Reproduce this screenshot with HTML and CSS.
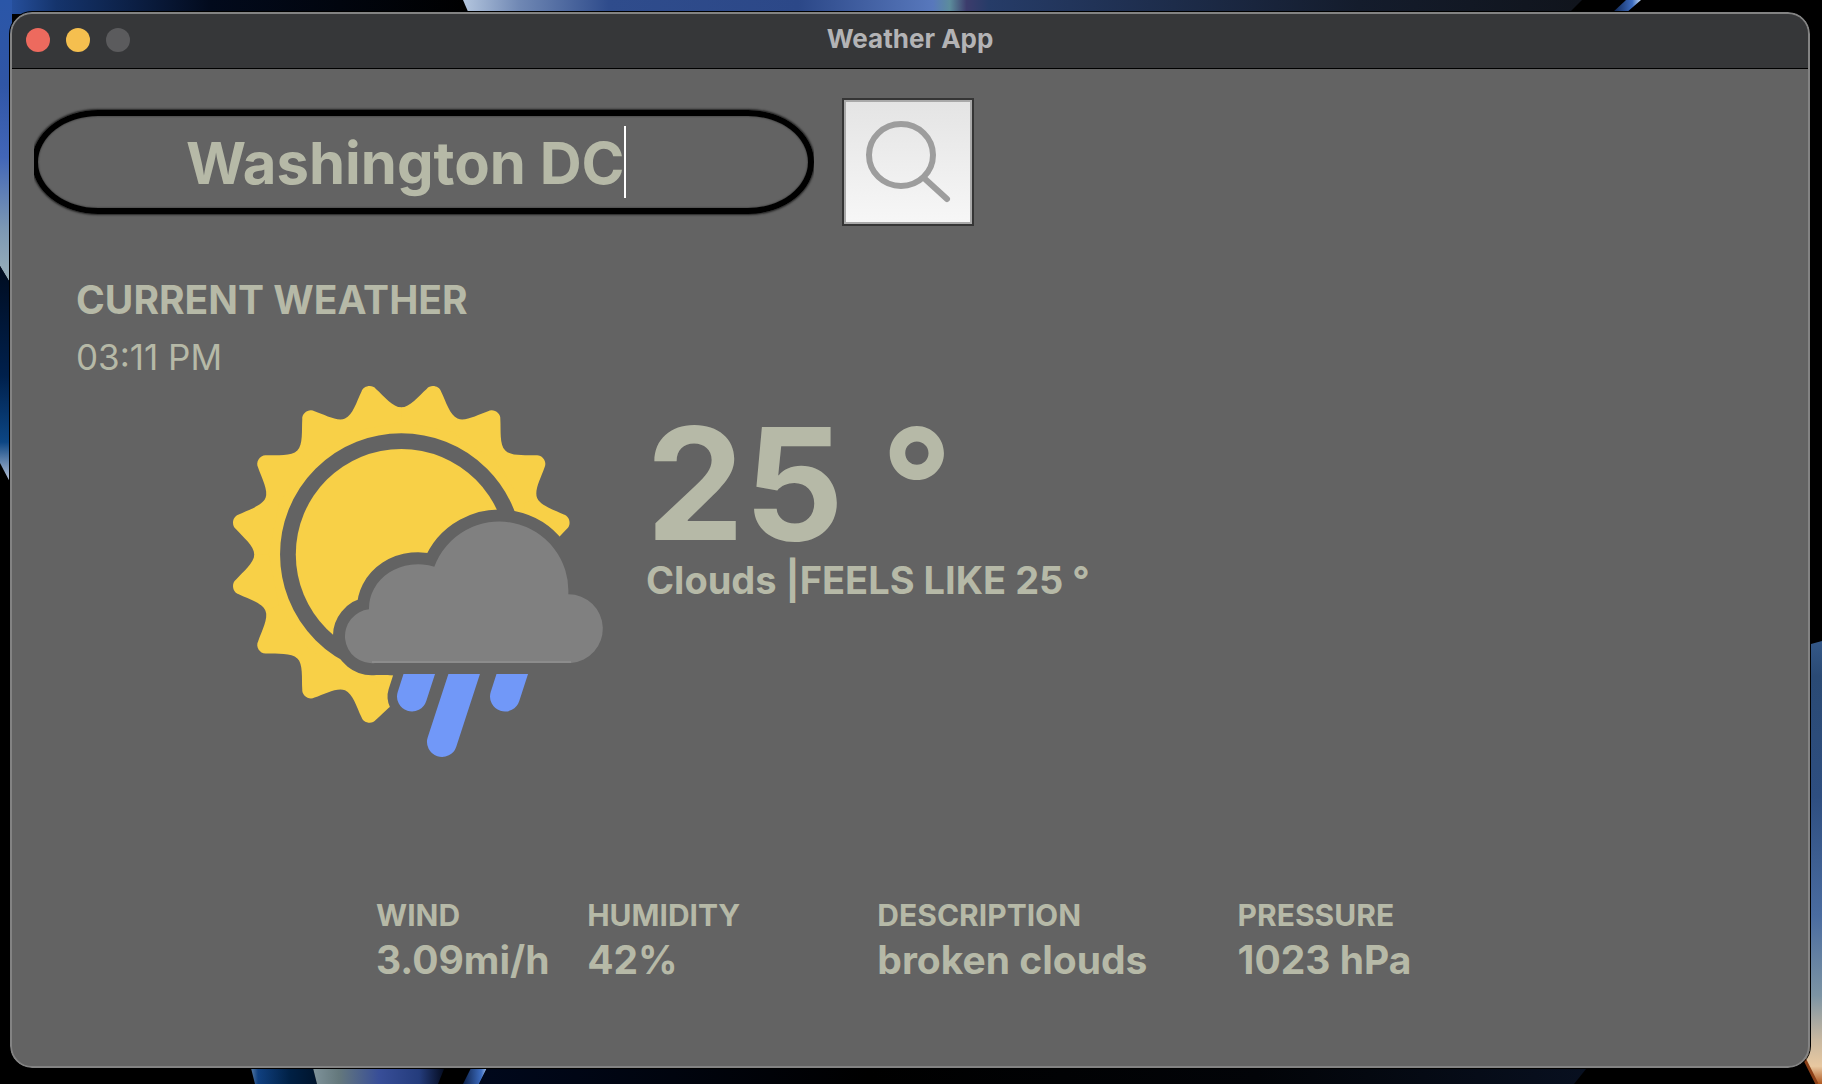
FILE: index.html
```html
<!DOCTYPE html>
<html lang="en">
<head>
<meta charset="utf-8">
<title>Weather App</title>
<link rel="stylesheet" href="styles.css">
</head>
<body>
<svg class="wallpaper" viewBox="0 0 1822 1084" preserveAspectRatio="none" aria-hidden="true">
  <defs>
    <linearGradient id="topLeft"><stop offset="0" stop-color="#2a56a8"/><stop offset=".12" stop-color="#15346c"/><stop offset=".45" stop-color="#020a1c"/><stop offset="1" stop-color="#000"/></linearGradient>
    <linearGradient id="topMid"><stop offset="0" stop-color="#b4c6de"/><stop offset=".05" stop-color="#7088b4"/><stop offset=".13" stop-color="#2f4c8c"/><stop offset=".3" stop-color="#2c4888"/><stop offset=".42" stop-color="#5878bc"/><stop offset=".435" stop-color="#5c8c9c"/><stop offset=".45" stop-color="#3c3c6c"/><stop offset=".47" stop-color="#263c68"/><stop offset=".8" stop-color="#141c2c"/><stop offset="1" stop-color="#10141c"/></linearGradient>
    <linearGradient id="leftUp" x2="0" y2="1"><stop offset="0" stop-color="#2a56a8"/><stop offset=".3" stop-color="#3056a6"/><stop offset=".55" stop-color="#4266b8"/><stop offset=".8" stop-color="#7c98b4"/><stop offset="1" stop-color="#9cb2ba"/></linearGradient>
    <linearGradient id="leftDown" x2="0" y2="1"><stop offset="0" stop-color="#000c20"/><stop offset=".5" stop-color="#00204c"/><stop offset=".8" stop-color="#0c4684"/><stop offset="1" stop-color="#d0d4e4"/></linearGradient>
    <linearGradient id="right" x2="0" y2="1"><stop offset="0" stop-color="#345888"/><stop offset=".08" stop-color="#2a4a74"/><stop offset=".35" stop-color="#2e4e80"/><stop offset=".62" stop-color="#4a6ca0"/><stop offset=".8" stop-color="#7c94a4"/><stop offset=".9" stop-color="#c8b8a0"/><stop offset=".96" stop-color="#e8c8a0"/><stop offset="1" stop-color="#b05820"/></linearGradient>
    <linearGradient id="bottomA"><stop offset="0" stop-color="#5c80a8"/><stop offset=".12" stop-color="#104080"/><stop offset=".6" stop-color="#002044"/><stop offset="1" stop-color="#00142c"/></linearGradient>
    <linearGradient id="bottomB"><stop offset="0" stop-color="#80949c"/><stop offset=".2" stop-color="#64787c"/><stop offset=".5" stop-color="#384e98"/><stop offset=".8" stop-color="#243c7c"/><stop offset="1" stop-color="#020818"/></linearGradient>
    <linearGradient id="bottomC"><stop offset="0" stop-color="#00081c"/><stop offset=".35" stop-color="#000"/><stop offset=".7" stop-color="#020408"/><stop offset="1" stop-color="#081020"/></linearGradient>
    <linearGradient id="streak"><stop offset="0" stop-color="#0c2048"/><stop offset=".7" stop-color="#3c6cc0"/><stop offset="1" stop-color="#c8dcf4"/></linearGradient>
  </defs>
  <rect width="1822" height="1084" fill="#000"/>
  <path d="M0 0H463L469 14H0Z" fill="url(#topLeft)"/>
  <path d="M463 0H1582L1568 14H469Z" fill="url(#topMid)"/>
  <path d="M1626 0H1641L1626 13H1612Z" fill="url(#streak)"/>
  <path d="M0 0H12V286L0 266Z" fill="url(#leftUp)"/>
  <path d="M0 266L12 286V486L0 463Z" fill="url(#leftDown)"/>
  <path d="M1800 647L1822 641V1084H1817L1800 1048Z" fill="url(#right)"/>
  <path d="M1802 1054L1817 1084" stroke="#8c4018" stroke-width="3"/>
  <path d="M250 1064H312L317 1084H255Z" fill="url(#bottomA)"/>
  <path d="M312 1064H446L438 1084H317Z" fill="url(#bottomB)"/>
  <path d="M473 1064H489L479 1084H463Z" fill="url(#streak)"/>
  <path d="M489 1064H1590L1574 1084H479Z" fill="url(#bottomC)"/>
</svg>

<div class="window">
  <header class="titlebar">
    <div class="lights">
      <button class="light light-close" type="button" aria-label="Close"></button>
      <button class="light light-minimize" type="button" aria-label="Minimize"></button>
      <button class="light light-zoom" type="button" aria-label="Zoom" disabled></button>
    </div>
    <h1 class="title">Weather App</h1>
  </header>

  <main class="content">
    <form class="search">
      <div class="field">
        <input class="city" type="text" aria-label="City" value="Washington DC" spellcheck="false">
        <span class="caret"></span>
      </div>
      <button class="search-button" type="button" aria-label="Search">
        <svg class="search-icon" viewBox="0 0 128 124" aria-hidden="true">
          <g fill="none" stroke="#9d9d9d" stroke-width="6" stroke-linecap="round">
            <ellipse cx="57" cy="55" rx="32" ry="31"/>
            <path d="M80 78L103 99"/>
          </g>
        </svg>
      </button>
    </form>

    <section class="current">
      <h2 class="heading">CURRENT WEATHER</h2>
      <p class="time">03:11 PM</p>
    </section>

    <section class="summary">
      <svg class="weather-icon" viewBox="230 384 376 376" role="img" aria-label="Sun behind a rain cloud">
        <defs>
          <path id="tooth" d="M-28.7 -144.2C-20.5 -145.8 -14 -158.5 -7.4 -167.2C-4.5 -172.8 4.5 -172.8 7.4 -167.2C14 -158.5 20.5 -145.8 28.7 -144.2L26 -130H-26Z"/>
          <path id="cloud" d="M375 663A26.5 26.5 0 0 1 369 609.3A49 44 0 0 1 434.3 566.7A69.2 69.2 0 0 1 568.3 594.3A34.4 34.4 0 0 1 571 663Z"/>
          <g id="drops" fill="none" stroke-linecap="round">
            <path d="M412 696.5L427 650"/><path d="M442 742L472 650"/><path d="M505 696.5L520 650"/>
          </g>
          <clipPath id="below"><rect x="380" y="674" width="200" height="90"/></clipPath>
          <mask id="cut" maskUnits="userSpaceOnUse" x="220" y="370" width="400" height="400">
            <rect x="220" y="370" width="400" height="400" fill="#fff"/>
            <use href="#cloud" fill="#000" stroke="#000" stroke-width="24"/>
            <use href="#drops" stroke="#000" stroke-width="49"/>
            <rect x="410" y="665" width="200" height="100" fill="#000"/>
          </mask>
        </defs>
        <g mask="url(#cut)">
          <g transform="translate(401.3 554.4)" fill="#f8d047">
            <circle r="105.5"/>
            <circle r="134" fill="none" stroke="#f8d047" stroke-width="25.5"/>
            <use href="#tooth" transform="rotate(11.25)"/>
            <use href="#tooth" transform="rotate(33.75)"/>
            <use href="#tooth" transform="rotate(56.25)"/>
            <use href="#tooth" transform="rotate(78.75)"/>
            <use href="#tooth" transform="rotate(191.25)"/>
            <use href="#tooth" transform="rotate(213.75)"/>
            <use href="#tooth" transform="rotate(236.25)"/>
            <use href="#tooth" transform="rotate(258.75)"/>
            <use href="#tooth" transform="rotate(281.25)"/>
            <use href="#tooth" transform="rotate(303.75)"/>
            <use href="#tooth" transform="rotate(326.25)"/>
            <use href="#tooth" transform="rotate(348.75)"/>
          </g>
        </g>
        <use href="#cloud" fill="#808080"/>
        <path d="M372 662H571" stroke="#8c8c8c" stroke-width="2"/>
        <g clip-path="url(#below)"><use href="#drops" stroke="#7198f8" stroke-width="30"/></g>
      </svg>
      <div class="reading">
        <p class="temperature">25 °</p>
        <p class="feels">Clouds |FEELS LIKE 25 °</p>
      </div>
    </section>

    <dl class="stats">
      <div class="stat"><dt>WIND</dt><dd>3.09mi/h</dd></div>
      <div class="stat"><dt>HUMIDITY</dt><dd>42%</dd></div>
      <div class="stat"><dt>DESCRIPTION</dt><dd>broken clouds</dd></div>
      <div class="stat"><dt>PRESSURE</dt><dd>1023 hPa</dd></div>
    </dl>
  </main>
</div>
</body>
</html>
```
FILE: styles.css
```css
* {
  box-sizing: border-box;
}

body {
  margin: 0;
  min-height: 100vh;
  padding: 12px 12px 16px 10px;
  display: flex;
  background: #000;
  color: #b6b9a7;
  font-family: Inter, "Liberation Sans", sans-serif;
  font-weight: 700;
}

h1, h2, p, dl, dd {
  margin: 0;
}

.wallpaper {
  position: absolute;
  inset: 0;
  width: 100%;
  height: 100%;
}

.window {
  position: relative;
  flex: 1;
  display: flex;
  flex-direction: column;
  border: 2px solid #838383;
  border-radius: 22px;
  overflow: hidden;
  background: #636363;
  outline: 1px solid #000;
}

.titlebar {
  display: grid;
  grid-template-columns: 1fr auto 1fr;
  align-items: center;
  height: 55px;
  padding: 0 14px;
  background: #363739;
  border-bottom: 1px solid #000;
}

.lights {
  display: flex;
  gap: 16px;
  padding-bottom: 2px;
}

.light {
  width: 24px;
  height: 24px;
  padding: 0;
  border: 0;
  border-radius: 50%;
}

.light-close { background: #ed6a5e; }
.light-minimize { background: #f5bf4f; }
.light-zoom { background: #5b5b5d; }

.title {
  padding-bottom: 4px;
  color: #b3b3b5;
  font-size: 26px;
  line-height: 32px;
}

.content {
  flex: 1;
  padding: 29px 22px;
}

.search {
  display: flex;
  align-items: center;
  gap: 28px;
}

.field {
  position: relative;
  width: 780px;
  overflow-x: clip;
}

.city {
  display: block;
  width: 782px;
  height: 104px;
  margin-left: -2px;
  padding: 2px 20px 0 148px;
  border: 6px solid #000;
  border-radius: 66px / 52px;
  box-shadow: 0 0 2px 1px #222, inset 0 0 2px #222;
  background: transparent;
  color: inherit;
  font: inherit;
  font-size: 58px;
  outline: 0;
}

.caret {
  position: absolute;
  left: 590px;
  top: 16px;
  width: 2px;
  height: 72px;
  background: #fff;
}

.search-button {
  width: 132px;
  height: 128px;
  padding: 0;
  border: 2px solid #353535;
  box-shadow: inset 0 0 0 2px #a9a9a9;
  background: linear-gradient(#e4e4e4, #f7f7f7);
}

.search-icon {
  display: block;
  width: 100%;
}

.current {
  margin-top: 50px;
  padding-left: 42px;
}

.heading {
  font-size: 39px;
  line-height: 48px;
}

.time {
  margin-top: 13px;
  font-size: 35px;
  font-weight: 400;
  line-height: 40px;
}

.summary {
  display: flex;
  gap: 40px;
  margin-top: 7px;
  padding-left: 196px;
}

.weather-icon {
  flex: none;
  width: 376px;
  height: 376px;
}

.reading {
  padding-top: 28px;
}

.temperature {
  font-size: 156px;
  line-height: 144px;
}

.feels {
  font-size: 38px;
  line-height: 48px;
}

.stats {
  display: grid;
  grid-template-columns: 211fr 290fr 360fr 548fr;
  margin-top: 137px;
  padding-left: 342px;
}

.stat {
  white-space: nowrap;
}

.stat dt {
  font-size: 30px;
  line-height: 36px;
}

.stat dd {
  margin-top: 3px;
  font-size: 39px;
  line-height: 48px;
}
```
